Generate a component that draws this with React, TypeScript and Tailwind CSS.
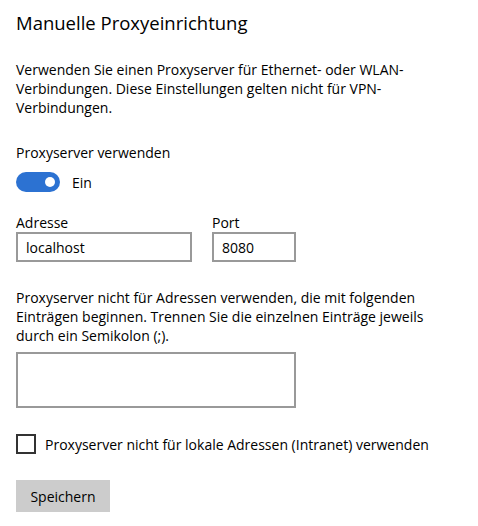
import { useState } from "react";

function Toggle({ on, onChange }: { on: boolean; onChange: (v: boolean) => void }) {
  return (
    <button
      type="button"
      onClick={() => onChange(!on)}
      className={`relative h-[20px] w-[44px] rounded-full ${on ? "bg-[#2c72d2]" : "border-2 border-[#333] bg-white"}`}
    >
      <span
        className={`absolute top-1/2 h-[10px] w-[10px] -translate-y-1/2 rounded-full ${on ? "right-[5px] bg-white" : "left-[3px] bg-[#333]"}`}
      />
    </button>
  );
}

export default function App() {
  const [enabled, setEnabled] = useState(true);
  const [local, setLocal] = useState(false);

  return (
    <div className="min-h-[526px] bg-white px-4 text-[14px] leading-[19px] text-black [font-family:'Open_Sans',sans-serif]">
      <h1 className="pt-[9px] text-[18.5px] leading-[28px]">Manuelle Proxyeinrichtung</h1>

      <p className="mt-[23px]">
        Verwenden Sie einen Proxyserver für Ethernet- oder WLAN-
        <br />
        Verbindungen. Diese Einstellungen gelten nicht für VPN-
        <br />
        Verbindungen.
      </p>

      <p className="mt-[26px]">Proxyserver verwenden</p>
      <div className="mt-[10px] flex items-center gap-3">
        <Toggle on={enabled} onChange={setEnabled} />
        <span>{enabled ? "Ein" : "Aus"}</span>
      </div>

      <div className="mt-[22px] flex gap-5">
        <label className="flex flex-col">
          <span className="leading-[18px]">Adresse</span>
          <input
            defaultValue="localhost"
            className="h-[30px] w-[176px] border-2 border-[#999] px-2 outline-none"
          />
        </label>
        <label className="flex flex-col">
          <span className="leading-[18px]">Port</span>
          <input
            defaultValue="8080"
            className="h-[30px] w-[84px] border-2 border-[#999] px-2 outline-none"
          />
        </label>
      </div>

      <p className="mt-[26px]">
        Proxyserver nicht für Adressen verwenden, die mit folgenden
        <br />
        Einträgen beginnen. Trennen Sie die einzelnen Einträge jeweils
        <br />
        durch ein Semikolon (;).
      </p>
      <textarea className="mt-[7px] block h-[56px] w-[280px] resize-none border-2 border-[#999] px-2 py-1 outline-none" />

      <label className="mt-[26px] flex items-center gap-[9px]">
        <span
          onClick={() => setLocal(!local)}
          className="flex h-[20px] w-[20px] items-center justify-center border-2 border-[#333] bg-white"
        >
          {local && <span className="text-[12px] leading-none">✓</span>}
        </span>
        <span>Proxyserver nicht für lokale Adressen (Intranet) verwenden</span>
      </label>

      <button type="button" className="mt-[26px] h-[32px] w-[94px] bg-[#ccc]">
        Speichern
      </button>
    </div>
  );
}
